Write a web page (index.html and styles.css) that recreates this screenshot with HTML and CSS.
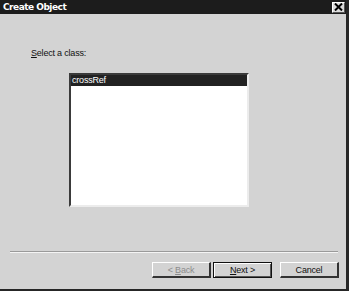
FILE: index.html
```html
<!DOCTYPE html>
<html lang="en">
<head>
    <meta charset="UTF-8">
    <title>Create Object</title>
    <link rel="stylesheet" href="styles.css">
</head>
<body>
    <div class="window">
        <div class="titlebar">
            <span class="title">Create Object</span>
            <span class="close-btn">
                <svg width="9" height="8" viewBox="0 0 9 8">
                    <path d="M1 0.5 L8 7.5 M8 0.5 L1 7.5" stroke="#000" stroke-width="2"/>
                </svg>
            </span>
        </div>
        <div class="content">
            <p class="label"><u>S</u>elect a class:</p>
            <div class="listbox">
                <div class="list-item selected">crossRef</div>
            </div>
        </div>
        <div class="separator"></div>
        <div class="buttons">
            <button class="btn disabled">&lt; <u>B</u>ack</button>
            <button class="btn default"><u>N</u>ext &gt;</button>
            <button class="btn">Cancel</button>
        </div>
    </div>
</body>
</html>
```

FILE: styles.css
```css
body {
    margin: 0;
    padding: 0;
    background-color: #d3d3d3;
    font-family: "Liberation Sans", Arial, sans-serif;
}
.window {
    width: 349px;
    height: 291px;
    box-sizing: border-box;
    background-color: #d3d3d3;
    border-right: 3px solid #262626;
    border-bottom: 2px solid #262626;
    display: flex;
    flex-direction: column;
}
.titlebar {
    height: 14px;
    background-color: #1c1c1c;
    color: white;
    display: flex;
    align-items: center;
    justify-content: space-between;
    padding: 0 1px 0 3px;
}
.title {
    font-family: "DejaVu Sans", Verdana, sans-serif;
    font-size: 9px;
    font-weight: bold;
    letter-spacing: -0.5px;
}
.close-btn {
    width: 13px;
    height: 11px;
    background-color: #dcdcdc;
    border-top: 1px solid #fff;
    border-left: 1px solid #fff;
    border-right: 1px solid #555;
    border-bottom: 1px solid #555;
    box-sizing: border-box;
    display: flex;
    align-items: center;
    justify-content: center;
}
.content {
    height: 237px;
    padding-left: 31px;
}
.label {
    margin: 34px 0 0 0;
    font-size: 9px;
    color: #111;
    letter-spacing: -0.2px;
}
.listbox {
    margin: 15px 0 0 38px;
    width: 180px;
    height: 134px;
    box-sizing: border-box;
    background-color: #fff;
    border-top: 2px solid #3a3a3a;
    border-left: 2px solid #3a3a3a;
    border-right: 2px solid #ececec;
    border-bottom: 2px solid #ececec;
}
.list-item {
    font-size: 9px;
    height: 11px;
    line-height: 11px;
    padding-left: 1px;
    letter-spacing: -0.2px;
}
.list-item.selected {
    background-color: #222;
    color: #fff;
}
.separator {
    margin: 0 8px 0 10px;
    height: 0;
    border-top: 1px solid #9a9a9a;
    border-bottom: 1px solid #f4f4f4;
}
.buttons {
    display: flex;
    justify-content: flex-end;
    gap: 2px;
    padding: 9px 7px 0 0;
}
.btn {
    width: 59px;
    height: 16px;
    padding: 0;
    margin: 0;
    font-family: "Liberation Sans", Arial, sans-serif;
    font-size: 9px;
    letter-spacing: -0.2px;
    color: #111;
    background-color: #d3d3d3;
    border-top: 1px solid #fff;
    border-left: 1px solid #fff;
    border-right: 2px solid #333;
    border-bottom: 2px solid #333;
    box-sizing: border-box;
}
.btn.disabled {
    color: #8c8c8c;
}
.btn.default {
    border: 1px solid #111;
    box-shadow: inset 1px 1px 0 #fff, inset -1px -1px 0 #555;
}
.btn:last-child {
    margin-left: 6px;
}
```
